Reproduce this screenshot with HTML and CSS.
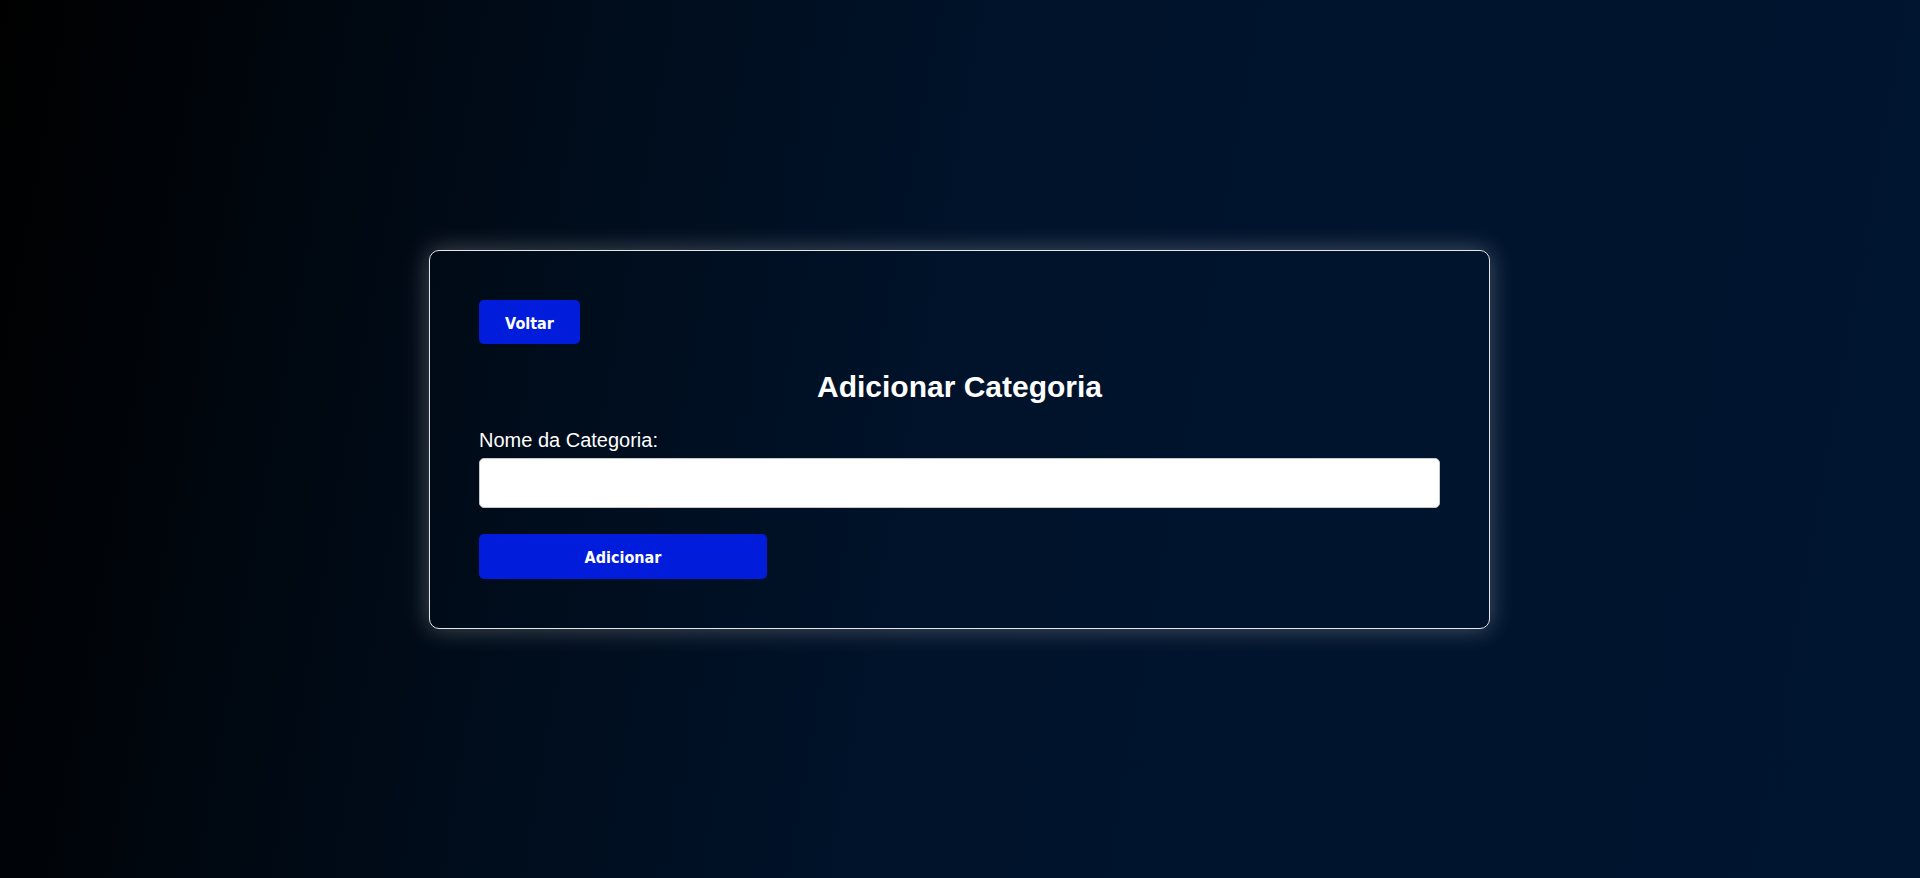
FILE: index.html
```html
<!DOCTYPE html>
<html lang="pt-BR">
<head>
<meta charset="UTF-8">
<title>Adicionar Categoria</title>
<link rel="stylesheet" href="styles.css">
</head>
<body>
<main class="page">
  <section class="card">
    <div class="top-row">
      <button class="btn btn-back" type="button">Voltar</button>
    </div>
    <h2 class="title">Adicionar Categoria</h2>
    <form class="form">
      <label class="label" for="nome">Nome da Categoria:</label>
      <input class="input" id="nome" type="text">
      <button class="btn btn-submit" type="button">Adicionar</button>
    </form>
  </section>
</main>
</body>
</html>
```

FILE: styles.css
```css
* {
  box-sizing: border-box;
}

html, body {
  margin: 0;
  padding: 0;
  height: 100%;
}

body {
  font-family: "Liberation Sans", Arial, sans-serif;
  color: #ffffff;
  background: linear-gradient(100deg, #000000 0%, #000b18 25%, #00132b 50%, #001530 100%);
}

.page {
  height: 878px;
  display: flex;
  align-items: center;
  justify-content: center;
  padding-right: 1px;
}

.card {
  width: 1061px;
  padding: 49px;
  border: 1px solid #e6e6e6;
  border-radius: 10px;
  background: transparent;
  box-shadow: 0 0 24px rgba(255, 255, 255, 0.28);
  display: flex;
  flex-direction: column;
}

.top-row {
  display: flex;
}

.btn {
  font-family: "DejaVu Sans Condensed", "DejaVu Sans", sans-serif;
  font-weight: bold;
  font-size: 16px;
  color: #ffffff;
  background: #011ddb;
  border: none;
  border-radius: 5px;
  cursor: pointer;
}

.btn-back {
  width: 101px;
  height: 44px;
  padding: 3px 0 0 0;
}

.title {
  margin: 25px 0 0 0;
  font-size: 30px;
  font-weight: bold;
  line-height: 35px;
  text-align: center;
}

.form {
  display: flex;
  flex-direction: column;
  align-items: flex-start;
  margin-top: 25px;
}

.label {
  font-size: 20px;
  line-height: 23px;
}

.input {
  margin-top: 6px;
  width: 100%;
  height: 50px;
  border: 1px solid #c8c8c8;
  border-radius: 5px;
  background: #ffffff;
  font-size: 18px;
  padding: 0 12px;
}

.btn-submit {
  margin-top: 26px;
  width: 288px;
  height: 45px;
  padding: 2px 0 0 0;
}
```
